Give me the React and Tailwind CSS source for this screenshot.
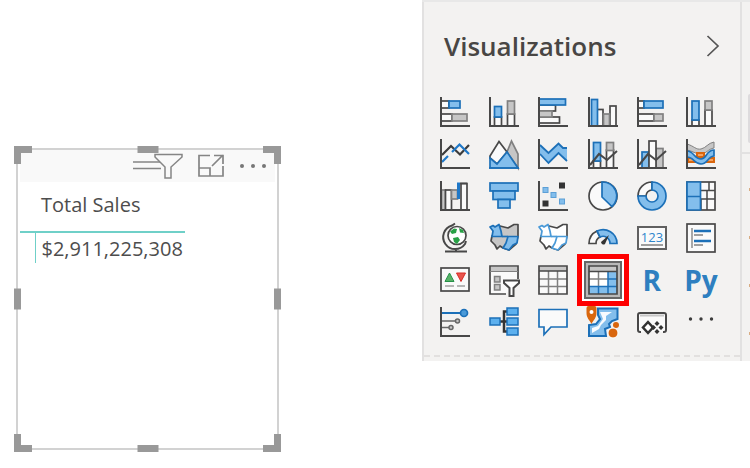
import React from 'react';
import clsx from 'clsx';

const D = '#484848'; // dark outline
const B = '#1c70b8'; // blue outline
const LB = '#83beec'; // blue fill
const G = '#808080'; // gray outline
const LG = '#c6c6c6'; // gray fill
const W = '#fafafa';
const O = '#d9660d'; // orange

const Axis = () => <path d="M1 0V29H30" fill="none" stroke={D} strokeWidth="2" />;

// a bar is [x, y, width, height, kind]
const kinds = {
  blue: { fill: LB, stroke: B },
  gray: { fill: LG, stroke: G },
  white: { fill: W, stroke: D },
};

const Bars = ({ items }) => items.map(([x, y, w, h, kind], i) => (
  <rect key={i} x={x} y={y} width={w} height={h} strokeWidth="1.7" {...kinds[kind]} />
));

const ComboLine = () => <path d="M2 26L11 15L19 21L29 12" fill="none" stroke={D} strokeWidth="2" />;

const visuals = [
  {
    name: 'Stacked bar chart',
    art: <><Bars items={[[1, 4, 8, 7, 'white'], [9, 4, 11, 7, 'blue'], [1, 17, 11, 7, 'white'], [12, 17, 15, 7, 'gray']]} /><Axis /></>,
  },
  {
    name: 'Stacked column chart',
    art: <><Bars items={[[5.5, 20, 7, 9, 'white'], [5.5, 9.5, 7, 10.5, 'blue'], [18.5, 17, 7, 12, 'white'], [18.5, 4, 7, 13, 'gray']]} /><Axis /></>,
  },
  {
    name: 'Clustered bar chart',
    art: <><Bars items={[[1, 8, 16.5, 6, 'white'], [1, 20, 20.5, 6, 'white'], [1, 14, 13, 6, 'gray'], [1, 2, 26.5, 6, 'blue']]} /><Axis /></>,
  },
  {
    name: 'Clustered column chart',
    art: <><Bars items={[[9, 12.5, 6, 16.5, 'white'], [22, 9, 6, 20, 'white'], [15.5, 17, 6, 12, 'gray'], [3.5, 2.5, 6, 26.5, 'blue']]} /><Axis /></>,
  },
  {
    name: '100% stacked bar chart',
    art: <><Bars items={[[1, 4, 6, 7, 'white'], [7, 4, 19, 7, 'blue'], [1, 17, 16, 7, 'white'], [17, 17, 9, 7, 'gray']]} /><Axis /></>,
  },
  {
    name: '100% stacked column chart',
    art: <><Bars items={[[6, 23, 7, 6, 'white'], [6, 4, 7, 19, 'blue'], [19, 13, 7, 16, 'white'], [19, 4, 7, 9, 'gray']]} /><Axis /></>,
  },
  {
    name: 'Line chart',
    art: (
      <g fill="none">
        <path d="M2 16L11 7L20 15.5L29 6" stroke="#3c3c3c" strokeWidth="2.2" />
        <path d="M2 23L8 17M12 13L19.5 5.5L29 15" stroke="#1f78c8" strokeWidth="2.2" />
        <Axis />
      </g>
    ),
  },
  {
    name: 'Area chart',
    art: (
      <g strokeWidth="1.7">
        <path d="M18 13L22.5 2L29 15V29Z" fill={LG} stroke={G} />
        <path d="M1 19V17L10 2.5L18 13L8 25Z" fill={W} stroke={D} />
        <path d="M1 29V19L8 25L18 13L29 29Z" fill={LB} stroke={B} />
        <path d="M0 29H30" stroke={B} />
      </g>
    ),
  },
  {
    name: 'Stacked area chart',
    art: (
      <>
        <path d="M2 6L10.5 14L20.5 4.5L25 9H29V22L20.5 14L10.5 24L2 15Z" fill={LB} />
        <path d="M2 6L10.5 14L20.5 4.5L25 9H29M2 15L10.5 24L20.5 14L29 22" fill="none" stroke={B} strokeWidth="1.8" />
        <Axis />
      </>
    ),
  },
  {
    name: 'Line and stacked column chart',
    art: <><Bars items={[[5.5, 22, 7, 7, 'white'], [5.5, 3.5, 7, 18.5, 'blue'], [18.5, 11, 7, 18, 'white'], [18.5, 3.5, 7, 8, 'gray']]} /><ComboLine /><Axis /></>,
  },
  {
    name: 'Line and clustered column chart',
    art: <><Bars items={[[19, 9.5, 7, 19.5, 'gray'], [5, 13, 7, 16, 'blue'], [12, 2, 7, 27, 'white']]} /><ComboLine /><Axis /></>,
  },
  {
    name: 'Ribbon chart',
    art: (
      <>
        <path d="M1 5C8 7 10 11 15 10C20 9 22 4 28 3V9C22 10 20 15 15 15C9 15 7 12 1 11Z" fill={LG} stroke={G} />
        <path d="M2 19H28V23H2ZM11 14H18V18H11Z" fill="#f5a15e" stroke={O} strokeWidth="2" />
        <path d="M1 12C8 12 8 20 15 20C21 20 20 11 28 11V17C22 17 22 25 15 25C8 25 8 18 1 18Z" fill={LB} stroke={B} strokeWidth="1.7" />
        <Axis />
      </>
    ),
  },
  {
    name: 'Waterfall chart',
    art: (
      <>
        <Bars items={[[1.5, 9, 4, 20, 'gray'], [5.5, 9, 6, 20, 'white'], [11.5, 9, 6, 9, 'gray'], [21, 2.5, 6, 26.5, 'white']]} />
        <path d="M20 2.5H27" stroke={D} strokeWidth="1.7" />
        <path d="M18.500 1.500V18" stroke="#1f78c8" strokeWidth="3" />
        <Axis />
      </>
    ),
  },
  {
    name: 'Funnel',
    art: <Bars items={[[1, 2, 28, 8, 'blue'], [4, 10, 22, 8.5, 'blue'], [9, 18.5, 12, 8.5, 'blue']]} />,
  },
  {
    name: 'Scatter chart',
    art: (
      <>
        <path d="M21 1.500h6v6h-6zM4.500 19.500h6v6h-6z" fill="#333" />
        <g fill={LB} stroke="#5c9fd6">
          <rect x="5" y="6.500" width="5" height="5" />
          <rect x="13" y="11.500" width="5" height="5" />
          <rect x="21.500" y="18" width="5" height="5" />
        </g>
        <Axis />
      </>
    ),
  },
  {
    name: 'Pie chart',
    art: (
      <>
        <circle cx="15" cy="15" r="14" fill={W} stroke={D} strokeWidth="1.7" />
        <path d="M14 1A14 14 0 0 1 24 25.500L14 16Z" fill={LB} stroke={B} strokeWidth="1.7" />
      </>
    ),
  },
  {
    name: 'Donut chart',
    art: (
      <g strokeWidth="1.7">
        <path d="M1 15A14 14 0 0 1 15 1V9A6 6 0 0 0 9 15Z" fill={W} stroke={D} />
        <path d="M15 1A14 14 0 1 1 1 15H9A6 6 0 1 0 15 9Z" fill={LB} stroke={B} />
      </g>
    ),
  },
  {
    name: 'Treemap',
    art: (
      <>
        <rect x="1" y="1" width="28" height="28" fill={W} stroke={D} strokeWidth="1.7" />
        <path d="M14 9.500H29M15 18V29M21 9.500V29M23 1V9.500M21 18H29M15 18H21" stroke={D} strokeWidth="1.5" />
        <path d="M1 1H14.500V29H1ZM1 15.500H14.500" fill={LB} stroke={B} strokeWidth="1.7" />
      </>
    ),
  },
  {
    name: 'Map',
    art: (
      <>
        <circle cx="17" cy="12.500" r="9" fill="#fff" stroke={D} strokeWidth="1.7" />
        <path d="M10 8.500L14 5.500L17 6L16 10L12 11ZM19 5L23 7L24 10L20 9.500ZM13 15L18 14L20 17L17 21L14 19Z" fill="#27a045" />
        <path d="M15 0.500L12 2.500A12 12 0 1 0 25 21L26 18M16 25V28M5 28.500H27" fill="none" stroke={D} strokeWidth="2" />
      </>
    ),
  },
  {
    name: 'Filled map',
    art: (
      <g strokeWidth="1.7" strokeLinejoin="round">
        <path d="M11 3L19 5L25 1.500H29V13L27 21L20 27L14 25L11 23L8 26L6 22L2 18L3 13Z" fill={LG} stroke={D} />
        <path d="M1 4L4 2.500L6 4L10 1.500L12 8L13 13.500H3L4 8Z" fill={LB} stroke={B} />
        <path d="M19 13.500H29L28 20L24 22L20 27L14 25L17 20Z" fill={LB} stroke={B} />
        <path d="M13 13.500H19" stroke={B} />
      </g>
    ),
  },
  {
    name: 'Shape map',
    art: (
      <g strokeWidth="1.7" strokeLinejoin="round" fill="#fff">
        <path d="M11 3L19 5L25 1.500H29V13L27 21L20 27L14 25L11 23L8 26L6 22L2 18L3 13Z" stroke={D} />
        <path d="M1 4L4 2.500L6 4L10 1.500L12 8L13 13.500H3L4 8Z" stroke="#4a9ad8" />
        <path d="M19 13.500H29L28 20L24 22L20 27L14 25L17 20Z" stroke="#4a9ad8" />
        <path d="M13 13.500H19" stroke="#4a9ad8" />
      </g>
    ),
  },
  {
    name: 'Gauge',
    art: (
      <>
        <path d="M1 20.500A14 14 0 0 1 9 8L12 14A7 7 0 0 0 8 20.500Z" fill={W} stroke={D} strokeWidth="1.7" />
        <path d="M9 8A14 14 0 0 1 29 20.500H22A7 7 0 0 0 12 14Z" fill={LB} stroke={B} strokeWidth="1.7" />
        <path d="M13 19L21 12L17 21A2.500 2.500 0 0 1 13 19Z" fill="#333" />
      </>
    ),
  },
  {
    name: 'Card',
    art: (
      <>
        <rect x="1" y="4" width="28" height="22" fill={W} stroke="#606060" strokeWidth="2" />
        <text x="15" y="18.500" textAnchor="middle" fontSize="13" fontWeight="400" fill="#2f86cc">123</text>
        <path d="M4 22H26" stroke={G} strokeWidth="1.5" />
      </>
    ),
  },
  {
    name: 'Multi-row card',
    art: (
      <>
        <rect x="1" y="1" width="28" height="28" fill={W} stroke={D} strokeWidth="1.700" />
        <path d="M6 5V25" stroke="#a8a8a8" strokeWidth="2" />
        <path d="M8 8H25M8 18H25" stroke={B} strokeWidth="2.500" />
        <path d="M8 12H17M8 22H17" stroke={G} strokeWidth="1.500" />
      </>
    ),
  },
  {
    name: 'KPI',
    art: (
      <>
        <rect x="1" y="3" width="28" height="23" fill={W} stroke={D} strokeWidth="1.700" />
        <path d="M5 16.500L9.500 8L14 16.500Z" fill="#58b368" stroke="#27914a" />
        <path d="M16.500 8H25.500L21 16.500Z" fill="#e8554d" stroke="#d92c27" />
        <path d="M5 21H14M17 21H25" stroke="#a0a0a0" strokeWidth="1.500" />
      </>
    ),
  },
  {
    name: 'Slicer',
    art: (
      <>
        <path d="M17 29H1V1H29V14" fill={W} stroke={D} strokeWidth="1.700" />
        <path d="M2 2H28V6H2Z" fill={LG} stroke="none" />
        <path d="M1 6.500H29" stroke={G} />
        <path d="M5.500 11.500H11V17H5.500ZM5.500 19.500H11V25H5.500Z" fill={LG} stroke={G} strokeWidth="1.500" />
        <path d="M15 15.500H30V18L24.500 23V31H20.500V23L15 18Z" fill="#fff" stroke={D} strokeWidth="2" />
      </>
    ),
  },
  {
    name: 'Table',
    art: (
      <>
        <rect x="1" y="1" width="28" height="28" fill={W} />
        <path d="M1 1H29V6H1Z" fill={LG} />
        <path d="M1 14H29M1 21.500H29M10.500 6V29M19.500 6V29" stroke={G} strokeWidth="1.500" />
        <path d="M1 6H29M1 1H29V29H1Z" fill="none" stroke={D} strokeWidth="1.700" />
      </>
    ),
  },
  {
    name: 'Matrix',
    selected: true,
    art: (
      <>
        <rect x="1" y="1" width="28" height="28" fill="#fff" />
        <path d="M1 1H29V6H1Z" fill={LG} />
        <path d="M20 7H29V29H1V21.500H20Z" fill={LB} />
        <path d="M1 14H20M10.500 7V21" stroke={G} strokeWidth="1.500" />
        <path d="M1 21.500H29M20 7V29M20 14H29M10.500 21V29" stroke={B} strokeWidth="1.500" />
        <path d="M1 6.500H29M1 1H29V29H1Z" fill="none" stroke={D} strokeWidth="1.700" />
      </>
    ),
  },
  { name: 'R script visual', label: 'R' },
  { name: 'Python visual', label: 'Py' },
  {
    name: 'Key influencers',
    art: (
      <>
        <path d="M2 6H20" stroke={B} strokeWidth="2" />
        <circle cx="24" cy="6" r="3.500" fill="#4a9ad8" stroke={B} strokeWidth="1.700" />
        <g fill={LG} stroke="#666" strokeWidth="1.500">
          <path d="M2 14H15M2 20.500H9" />
          <circle cx="17.500" cy="14" r="2" />
          <circle cx="11" cy="20.500" r="2" />
        </g>
        <Axis />
      </>
    ),
  },
  {
    name: 'Decomposition tree',
    art: (
      <>
        <path d="M10 14.500H18M19 4.500H15V24.500H19" fill="none" stroke="#333" strokeWidth="2.500" />
        <g fill="#5cb0ee" stroke={B} strokeWidth="1.500">
          <rect x="1" y="11" width="10" height="7" />
          <rect x="18" y="1" width="11" height="7" />
          <rect x="18" y="11" width="11" height="7" />
          <rect x="18" y="21" width="11" height="7" />
        </g>
      </>
    ),
  },
  {
    name: 'Q&A',
    art: <path d="M1 2.500H29V20H13L6 27.500V20H1Z" fill={W} stroke={B} strokeWidth="1.700" />,
  },
  {
    name: 'ArcGIS map',
    art: (
      <>
        <path d="M10 1.500H29.500V12L24 14L21 17L22 20L17 22L18 29H1V18L8 17L12 12L10 8Z" fill={LB} stroke={B} strokeWidth="2" />
        <path d="M12 5H24L18 9V13L13 18L11 22L4 26V21L10 19L15 12Z" fill="#f8fbfe" />
        <path d="M3.500 17C1.500 13 -1.500 11 -1.500 6V1Q-1.500 -1 0.500 -1H6.500Q8.500 -1 8.500 1V6C8.500 11 5.500 13 3.500 17Z" fill={O} />
        <circle cx="3.500" cy="5" r="2" fill="#fff" />
        <circle cx="28" cy="18" r="3" fill={O} />
        <circle cx="25" cy="26" r="5" fill={O} stroke="#fff" />
      </>
    ),
  },
  {
    name: 'Power Apps',
    art: (
      <>
        <path d="M4 25H3Q1 25 1 23V8Q1 6 3 6H27Q29 6 29 8V23Q29 25 27 25H26" fill={W} stroke={D} strokeWidth="2" />
        <path d="M3 8.500H27" stroke={LG} strokeWidth="2" />
        <path d="M11 15L16 20.500L11 26L6 20.500Z" fill="#fff" stroke="#333" strokeWidth="2.500" />
        <path d="M20 14l2.500 2.500L20 19l-2.500-2.500ZM20 22l2.500 2.500L20 27l-2.500-2.500ZM16.500 18l2.500 2.500L16.500 23L14 20.500ZM24 18l2.500 2.500L24 23l-2.500-2.500Z" fill="#333" />
      </>
    ),
  },
  {
    name: 'Get more visuals',
    art: <g fill="#3c3c3c"><circle cx="4.500" cy="12" r="1.700" /><circle cx="15" cy="12" r="1.700" /><circle cx="25.500" cy="12" r="1.700" /></g>,
  },
];

// resize grips around the selected visual
const grips = [
  'left-0 top-0 h-[18px] w-[18px] border-l-[7px] border-t-[7px]',
  'right-0 top-0 h-[18px] w-[18px] border-r-[7px] border-t-[7px]',
  'left-0 bottom-0 h-[18px] w-[18px] border-l-[7px] border-b-[7px]',
  'right-0 bottom-0 h-[18px] w-[18px] border-r-[7px] border-b-[7px]',
  'left-1/2 top-0 w-[21px] -translate-x-1/2 border-t-[7px]',
  'left-1/2 bottom-0 w-[21px] -translate-x-1/2 border-b-[7px]',
  'left-0 top-1/2 h-[21px] -translate-y-1/2 border-l-[7px]',
  'right-0 top-1/2 h-[21px] -translate-y-1/2 border-r-[7px]',
];

function MatrixVisual() {
  return (
    <section className="relative mt-[146px] ml-[14px] w-[267px] shrink-0 p-0.5">
      <div className="min-h-[302px] border-2 border-[#d2d2d2] bg-white px-0.5">

        {/* Visual header */}
        <div className="flex h-8 items-center justify-end gap-3.5 bg-[#f9f9f9] pr-2">
          <button aria-label="Filters">
            <svg className="block" width="50" height="26" viewBox="0 0 50 26" fill="none" stroke="#858585" strokeWidth="1.5">
              <path d="M0 9H28M0 15.500H28" />
              <path d="M22 1.500H49V4L38 14V25H32V14L22 4Z" fill="#f9f9f9" />
            </svg>
          </button>
          <button aria-label="Focus mode">
            <svg className="block" width="28" height="26" viewBox="0 0 28 26" fill="none" stroke="#858585" strokeWidth="1.7">
              <path d="M13 2.500H2V23H26V13M2 15H13V23M15 13L26 2M17 2.500H26V11" />
            </svg>
          </button>
          <button aria-label="More options">
            <svg className="block" width="28" height="26" viewBox="0 0 28 26" fill="#777">
              <circle cx="3" cy="13" r="2" />
              <circle cx="14" cy="13" r="2" />
              <circle cx="25" cy="13" r="2" />
            </svg>
          </button>
        </div>

        <table className="border-collapse text-left text-xl text-[#4d4d4d]">
          <thead>
            <tr className="border-b-2 border-[#6fd0c8]">
              <td className="w-[15px]"></td>
              <th className="h-[50px] pb-1 pl-1.5 font-normal">Total Sales</th>
            </tr>
          </thead>
          <tbody>
            <tr>
              <td></td>
              <td className="h-[30px] border-l border-[#6fd0c8] pt-0.5 pr-0.5 pl-1.5">$2,911,225,308</td>
            </tr>
          </tbody>
        </table>
      </div>

      {grips.map((grip) => (
        <span key={grip} className={clsx('absolute border-[#999]', grip)}></span>
      ))}
    </section>
  );
}

function VisualButton({ visual }) {
  return (
    <button aria-label={visual.name} className="relative size-[30px] text-[28px] leading-[30px] font-bold text-[#2e7fc0]">
      {visual.selected && (
        <>
          <span className="absolute -inset-[11px] border-[5px] border-[#fe0000] bg-white"></span>
          <span className="absolute -inset-1 border-2 border-[#666] bg-[#b8b8b8]"></span>
        </>
      )}
      {visual.label ? (
        <span className="flex justify-center">{visual.label}</span>
      ) : (
        <svg className="relative block overflow-visible" width="30" height="30" viewBox="0 0 30 30">{visual.art}</svg>
      )}
    </button>
  );
}

function VisualizationsPane() {
  return (
    <section className="flex-1 border-x-2 border-[#e2e1e1] pb-1">
      <header className="flex items-center justify-between pt-6 pr-5 pl-5">
        <h2 className="text-[26px] leading-10 font-semibold text-[#484644]">Visualizations</h2>
        <button aria-label="Collapse pane">
          <svg className="block" width="14" height="22" viewBox="0 0 14 22" fill="none" stroke="#555" strokeWidth="1.7">
            <path d="M1.500 1L12 11L1.500 21" />
          </svg>
        </button>
      </header>

      {/* Visual picker */}
      <div className="mt-[31px] mr-6 ml-4 grid grid-cols-[repeat(6,30px)] justify-between gap-y-3">
        {visuals.map((visual) => (
          <VisualButton key={visual.name} visual={visual} />
        ))}
      </div>
      <div className="mt-[18px] border-t-2 border-dashed border-[#e2e0df]"></div>
    </section>
  );
}

// the next pane, only its edge is in view
function FieldsPaneEdge() {
  return (
    <aside className="flex w-2 flex-col items-end">
      <div className="mt-[92px] h-[49px] w-0.5 rounded-l bg-[#dddbdd]"></div>
      <div className="mt-[9px] w-full border-t-2 border-[#e2e1e1]"></div>
      <div className="mt-[34px] flex flex-col gap-[45px]">
        {[0, 1, 2, 3].map((i) => (
          <span key={i} className="h-[3px] w-px bg-[#d9ad84]"></span>
        ))}
      </div>
    </aside>
  );
}

function App() {
  return (
    <main className="flex min-h-screen items-start justify-between bg-white font-['Open_Sans','Noto_Sans',sans-serif]">
      <MatrixVisual />
      <div className="flex w-82 border-t-2 border-[#e8e8e8] bg-[#f3f2f1]">
        <VisualizationsPane />
        <FieldsPaneEdge />
      </div>
    </main>
  );
}

export default App;
